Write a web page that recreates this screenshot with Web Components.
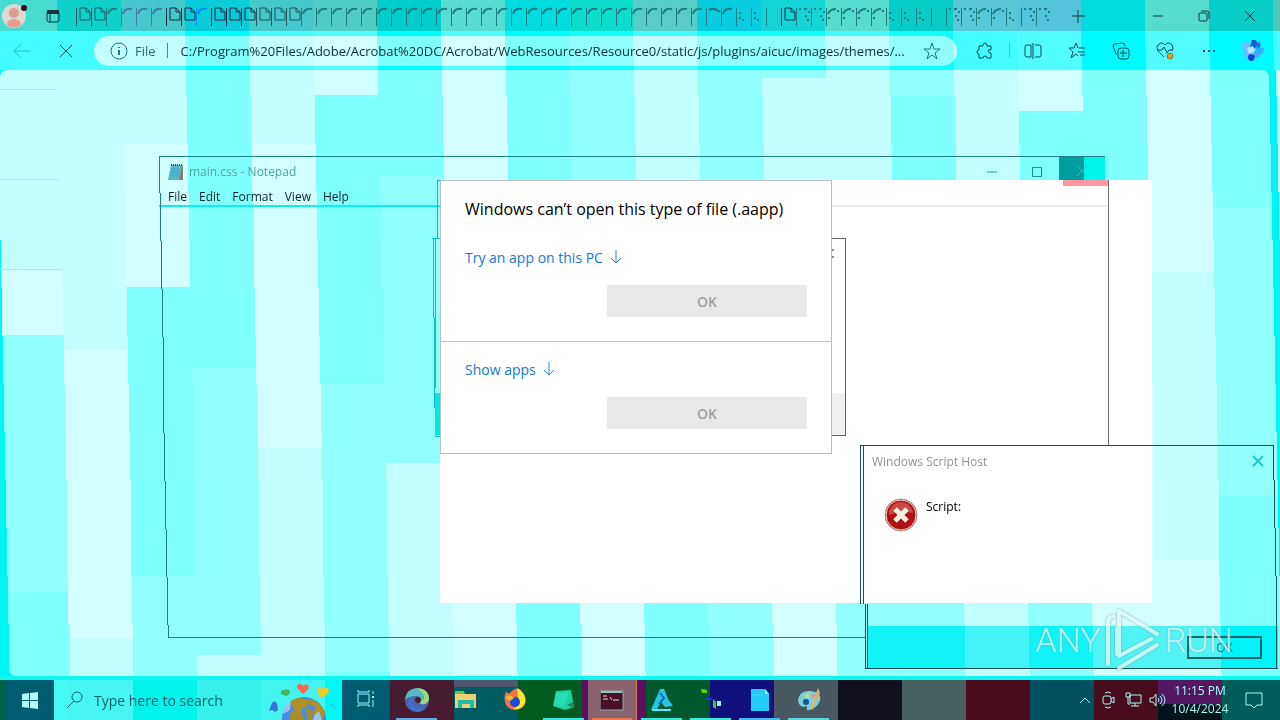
<!DOCTYPE html>
<html lang="en">
<head>
<meta charset="utf-8">
<title>Desktop</title>
<style>
    body {
        margin: 0;
        font-family: "Open Sans", "Noto Sans", sans-serif;
        font-size: 12px;
        color: #0c2c34;
    }
</style>
</head>
<body>
<desktop-shell>
    <edge-browser url="C:/Program%20Files/Adobe/Acrobat%20DC/Acrobat/WebResources/Resource0/static/js/plugins/aicuc/images/themes/..."></edge-browser>
    <notepad-window file="main.css - Notepad"></notepad-window>
    <blank-block></blank-block>
    <open-with-dialog>
        <span slot="title">Windows can’t open this type of file (.aapp)</span>
        <open-option label="Try an app on this PC"></open-option>
        <open-option label="Show apps"></open-option>
    </open-with-dialog>
    <script-host-dialog>Script:</script-host-dialog>
    <run-watermark></run-watermark>
    <task-bar slot="taskbar"></task-bar>
</desktop-shell>

<script>
// hard-edged gradient from [end, color] pairs
function bands(list) {
    let start = 0;
    const stops = list.map(([end, color]) => {
        const stop = `${color} ${start}px ${end}px`;
        start = end;
        return stop;
    });
    return `linear-gradient(90deg, ${stops.join(", ")})`;
}

function define(name, html, setup) {
    customElements.define(name, class extends HTMLElement {
        constructor() {
            super();
            this.attachShadow({ mode: "open" });
            this.shadowRoot.innerHTML = html;
        }

        connectedCallback() {
            if (setup) setup(this.shadowRoot, this);
        }
    });
}

/* --- BACKDROP: 64px columns that move one pixel right every 48px --- */

const TONES = { A: "#d2ffff", B: "#c4ffff", C: "#92ffff", D: "#80ffff" };
const COLUMNS = [
    "B270 A335 C591 D720", "B350 A638 B720", "B143 A287 D575 C720", "D367 C655 B720",
    "B143 A448 B720", "A95 D383 C671 D720", "D175 C463 B720", "A720",
    "D720", "C300 A720", "B300 D720", "C720",
    "C78 B300 A720", "B300 C720", "C95 D300 C720", "B720",
    "A111 D300 C720", "D300 A720", "A272 B560 A720", "D207 C495 D720", "B720"
];

define("glitch-backdrop", `
    <style>
        :host {
            display: block;
            position: absolute;
            inset: 0;
            z-index: -2;
        }

        svg {
            display: block;
            width: 100%;
            height: 100%;
        }
    </style>
    <svg viewBox="0 0 1280 720" preserveAspectRatio="none" shape-rendering="crispEdges" aria-hidden="true"></svg>
`, (root) => {
    let shapes = "";
    COLUMNS.forEach((column, k) => {
        let top = 0;
        column.split(" ").forEach((part) => {
            const bottom = Number(part.slice(1));
            for (let y = top; y < bottom;) {
                const band = Math.floor(y / 48);
                const end = Math.min(bottom, (band + 1) * 48);
                const x = k === 0 ? 0 : 57 + 64 * (k - 1) + band - (band > 10 ? 1 : 0);
                shapes += `<rect x="${x}" y="${y}" width="80" height="${end - y}" fill="${TONES[part[0]]}"/>`;
                y = end;
            }
            top = bottom;
        });
    });
    // window edges of the page
    for (let band = 1; band < 15; band++) {
        const y = Math.max(70, band * 48);
        const h = (band + 1) * 48 - y;
        shapes += `<rect x="${1268 + band}" y="${y}" width="7" height="${h}" fill="#00f4f4"/>`;
        if (band > 3) shapes += `<rect x="0" y="${y}" width="${band - 4}" height="${h}" fill="#00f4f4"/>`;
    }
    shapes += `<path d="M0 70h8q-8 0-8 8zM1261 70h8v8q0-8-8-8zM9 676v-8q0 8 8 8z" fill="#00f4f4" shape-rendering="auto"/>
        <path d="M0 89.500H56M0 179.500H59M0 269.500H62" stroke="#98eef0"/>`;
    root.querySelector("svg").innerHTML = shapes;
});

define("desktop-shell", `
    <style>
        :host {
            display: grid;
            grid-template-rows: 1fr 40px;
            position: relative;
            min-height: 100vh;
            overflow: hidden;
        }
    </style>
    <glitch-backdrop></glitch-backdrop>
    <slot></slot>
    <slot name="taskbar"></slot>
`);

/* --- BROWSER --- */

const TAB_ICONS = {
    d: `<path d="M4 8h6l4 4v8H4zM10 8v4h4"/>`,
    a: `<path d="M2 14C3 10 6 8 11 9" stroke-width="2"/>`,
    c: `<path d="M3 10q5-3 11 2" stroke-width="2"/>`,
    o: `<path d="M3 13h2M3 18h2M6 20h2" stroke-width="2"/>`,
    q: `<path d="M3 9h2M8 9h3M12 12h2M9 16h2M11 20h2" stroke-width="2"/>`,
    r: `<path d="M2 14q2-5 8-5M2 18h2M11 11h2" stroke-width="2"/>`,
    l: ""
};
const TABS = "ddapppDDbDDDddd" + "a".repeat(27) + "caoolDqqrrrrooolqqrroqq";
const TAB_COLORS = { p: "#4878a8", b: "#008cf8", D: "#102c44" };

define("tab-strip", `
    <style>
        :host {
            display: flex;
            align-items: center;
            height: 31px;
            padding-right: 7px;
            color: #18343c;
        }

        .lead {
            display: flex;
            flex: 0 0 76px;
            align-items: center;
        }

        nav {
            display: flex;
            flex: 0 1 990px;
            min-width: 0;
        }

        button {
            box-sizing: border-box;
            border: 0;
            padding: 0;
            background: none;
            color: inherit;
            font: inherit;
        }

        .tab {
            flex: 0 1 15px;
            height: 31px;
            color: #207c80;
        }

        .control {
            display: grid;
            place-items: center;
            width: 46px;
            height: 31px;
        }

        .add {
            width: 24px;
        }

        .space {
            flex: 1;
        }

        svg {
            display: block;
            fill: none;
            stroke: currentColor;
        }

        .avatar {
            stroke: none;
        }
    </style>
    <div class="lead">
        <button aria-label="Profile"><svg class="avatar" width="30" height="31">
            <circle cx="14" cy="16" r="12" fill="#dcd8d4"/>
            <circle cx="14" cy="13" r="5" fill="#e09c94"/>
            <path d="M7 25q0-6 7-6t7 6q-7 5-14 0z" fill="#e89c90"/>
            <circle cx="24" cy="8" r="3" fill="#2c1018"/>
        </svg></button>
        <button class="control" aria-label="Tab actions"><svg width="16" height="16">
            <path d="M2 4h12" stroke-width="4"/><rect x="2" y="3" width="12" height="11" rx="2"/><path d="M5 5v9"/>
        </svg></button>
    </div>
    <nav aria-label="Tabs"></nav>
    <button class="control add" aria-label="New tab"><svg width="14" height="14"><path d="M7 1v13M1 7h13"/></svg></button>
    <span class="space"></span>
    <button class="control" aria-label="Minimize"><svg width="12" height="12"><path d="M1 6h10"/></svg></button>
    <button class="control" aria-label="Restore"><svg width="12" height="12"><rect x="1" y="3" width="8" height="8" rx="1"/><path d="M3 1h6q2 0 2 2v6"/></svg></button>
    <button class="control" aria-label="Close"><svg width="12" height="12"><path d="M1 1l10 10M11 1L1 11"/></svg></button>
`, (root, host) => {
    host.style.background = bands([
        [57, "#48dcd0"], [121, "#10d0cc"], [185, "#44c8cc"], [249, "#08ccd8"], [313, "#44c8cc"],
        [377, "#50ccc4"], [441, "#00cccc"], [505, "#58dcd4"], [569, "#00dce0"], [633, "#0cdccc"],
        [697, "#58ccc8"], [761, "#08cce0"], [825, "#14d4d8"], [889, "#54dccc"], [953, "#08ccc8"],
        [1017, "#58c8d8"], [1081, "#54c4dc"], [1145, "#00dce0"], [1209, "#54dccc"], [1273, "#08ccc8"], [2600, "#50c8c0"]
    ]);
    root.querySelector("nav").innerHTML = [...TABS].map((kind, i) => {
        const icon = kind === "D" ? "d" : "pb".includes(kind) ? "a" : kind;
        const color = TAB_COLORS[kind] || (kind === "d" ? "#1c5860" : "#207c80");
        return `<button class="tab" aria-label="Tab ${i + 1}" style="color: ${color}">
            <svg width="15" height="31"><path d="M.500 8v18"/>${TAB_ICONS[icon]}</svg></button>`;
    }).join("");
});

define("address-bar", `
    <style>
        :host {
            display: flex;
            align-items: center;
            position: relative;
            height: 39px;
            padding-right: 5px;
        }

        /* takes the red out of the columns behind */
        :host::before {
            content: "";
            position: absolute;
            inset: 0;
            z-index: -1;
            background: #800400;
            mix-blend-mode: difference;
        }

        .pill {
            display: flex;
            flex: 1;
            align-items: center;
            position: relative;
            min-width: 0;
            height: 30px;
            margin: 0 6px;
        }

        .pill::before {
            content: "";
            position: absolute;
            inset: 0;
            z-index: -1;
            border-radius: 15px;
            background: #800400;
            mix-blend-mode: plus-lighter;
        }

        button {
            display: grid;
            place-items: center;
            width: 44px;
            height: 30px;
            border: 0;
            padding: 0;
            background: none;
            color: #0c4c54;
        }

        button:disabled {
            color: #20c4c8;
        }

        .info {
            display: flex;
            gap: 7px;
            width: auto;
            padding: 0 11px 0 16px;
            font: 13px "Open Sans", sans-serif;
            color: #286c74;
        }

        .star {
            width: 50px;
        }

        input {
            flex: 1;
            min-width: 0;
            border: 0;
            padding: 0;
            outline: 0;
            background: none;
            font: 13px "Open Sans", sans-serif;
            color: #083038;
        }

        .line {
            width: 1px;
            height: 15px;
            margin-right: 13px;
            background: #3c8c94;
        }

        .divider {
            width: 1px;
            height: 15px;
            margin: 0 1px 0 2px;
            background: #28d0d4;
        }

        svg {
            fill: none;
            stroke: currentColor;
        }

        .info svg,
        .star svg {
            stroke: #147c84;
        }

        .copilot {
            stroke: none;
        }
    </style>
    <button aria-label="Back" disabled><svg width="18" height="16"><path d="M17 8H1M8 1L1 8l7 7"/></svg></button>
    <button aria-label="Stop"><svg width="14" height="14"><path d="M1 1l12 12M13 1L1 13"/></svg></button>
    <div class="pill">
        <button class="info"><svg width="18" height="18"><circle cx="9" cy="9" r="8"/><path d="M9 8v5M9 5v1" stroke-width="2"/></svg>File</button>
        <span class="line"></span>
        <input type="text" aria-label="Address">
        <button class="star" aria-label="Add to favorites"><svg width="18" height="18"><path d="M9 1l2 6h6l-5 4 2 6-5-4-5 4 2-6-5-4h6z" stroke-linejoin="round"/></svg></button>
    </div>
    <button aria-label="Extensions"><svg width="18" height="18"><path d="M3 4h4q0-3 2-3t2 3h4v4q-3-1-3 1t3 2v5h-4q0-2-2-2t-2 2H3v-4q-2 0-2-2t2-2z"/></svg></button>
    <span class="divider"></span>
    <button aria-label="Split screen"><svg width="18" height="18"><path d="M7 3H3q-2 0-2 2v8q0 2 2 2h4zM11 3h4q2 0 2 2v8q0 2-2 2h-4M9 1v16"/></svg></button>
    <button aria-label="Favorites"><svg width="18" height="18"><path d="M10 6L8 1 6 6H1l4 4-2 6 5-4 2 2M11 6h6M10 10h7M12 13h5" stroke-linejoin="round"/></svg></button>
    <button aria-label="Collections"><svg width="18" height="18"><rect x="6" y="6" width="11" height="11" rx="3"/><path d="M11 8v7M8 11h7M5 12q-2 0-2-3L1 4q0-2 2-2l7-1q3 0 3 3"/></svg></button>
    <button aria-label="Browser essentials"><svg width="18" height="18"><path d="M8 15L2 9q-2-4 0-6 4-4 7 0 3-4 7 0 2 3 0 6M1 8h5l2-3 3 6 2-3h4"/><circle cx="14" cy="14" r="3" fill="#d8a818" stroke="#987810"/></svg></button>
    <button aria-label="Settings and more"><svg width="16" height="4"><path d="M2 2h2M7 2h2M12 2h2" stroke-width="2"/></svg></button>
    <button aria-label="Copilot"><svg class="copilot" width="24" height="24">
        <path d="M1 6q1-4 6-3l5 2 1 8-4 6q-6 1-7-4z" fill="#68c0f8"/>
        <path d="M11 1h4l2 5-4 4-4-2z" fill="#1460d8"/>
        <path d="M16 8l7 1q0 5-3 7l-7-2z" fill="#30b0f8"/>
        <path d="M15 6l3-4 2 5-4 3z" fill="#2474e4"/>
        <path d="M8 15l6 1q0 5-3 6-4 0-4-4z" fill="#1838d8"/>
        <path d="M6 9l6-2 2 5-6 3z" fill="#b8e4fc"/>
        <path d="M12 14l5-1 2 5-4 1z" fill="#50a8f0"/>
    </svg></button>
`);

define("edge-browser", `
    <style>
        :host {
            display: grid;
            grid-template-rows: auto auto 1fr;
        }

        /* bottom frame of the window */
        footer {
            align-self: end;
            height: 4px;
            background: #14f4f0;
        }
    </style>
    <tab-strip></tab-strip>
    <address-bar></address-bar>
    <footer></footer>
`, (root, host) => {
    root.querySelector("address-bar").shadowRoot.querySelector("input").value = host.getAttribute("url");
});

/* --- NOTEPAD --- */

define("notepad-window", `
    <style>
        :host {
            display: flex;
            flex-direction: column;
            position: absolute;
            left: 159px;
            top: 156px;
            width: 949px;
            height: 482px;
        }

        header {
            display: flex;
            align-items: center;
            height: 31px;
            padding-left: 8px;
            color: #48a8a4;
        }

        h1 {
            flex: 1;
            margin: 0 0 0 4px;
            font-size: 12px;
            font-weight: 400;
        }

        button {
            display: grid;
            place-items: center;
            border: 0;
            padding: 0;
            background: none;
            font: inherit;
            color: #188c94;
        }

        header button {
            width: 45px;
            height: 30px;
        }

        header .close {
            width: 46px;
            margin-right: 3px;
            align-self: start;
            background: linear-gradient(90deg, #009ca0 25px, #00f4ec 25px);
            color: #28c0c0;
        }

        nav {
            display: flex;
            gap: 12px;
            height: 18px;
            padding-left: 9px;
            border-bottom: 2px solid #10ecf0;
        }

        nav button {
            color: #08242c;
        }

        svg {
            fill: none;
            stroke: currentColor;
        }

        .icon {
            stroke: none;
        }

        .frame {
            position: absolute;
            inset: 0;
            width: 100%;
            height: 100%;
            color: #1c808c;
            pointer-events: none;
        }
    </style>
    <header>
        <svg class="icon" width="18" height="18" aria-hidden="true">
            <path d="M4 2h12l-1 13-2 2H1z" fill="#54b8cc"/><path d="M15 3h1v14h-4z" fill="#907c60"/>
            <path d="M4 2h12" stroke="#305c68" stroke-width="2" stroke-dasharray="1 1"/><path d="M5 6h8M5 9h7M4 12h8" stroke="#38a0d4"/>
        </svg>
        <h1></h1>
        <button aria-label="Minimize"><svg width="12" height="12"><path d="M1 6h10"/></svg></button>
        <button aria-label="Maximize"><svg width="12" height="12"><path d="M1.500 1.500h9v9h-9z"/></svg></button>
        <button class="close" aria-label="Close"><svg width="12" height="12"><path d="M1 1l10 10M11 1L1 11"/></svg></button>
    </header>
    <nav>
        <button>File</button><button>Edit</button><button>Format</button><button>View</button><button>Help</button>
    </nav>
    <svg class="frame" viewBox="0 0 949 482" preserveAspectRatio="none" shape-rendering="crispEdges">
        <path d="M0 36V0H945M1 36V84M2 84V132M3 132V180M4 180V276M5 276V324M6 324V372M7 372V420M8 420V468M9 468V481H706" transform="translate(.500 .500)"/>
        <path d="M278 83V24h3M273 82h8M274 82v80M275 162v90M276 252v28h5M276 82v150" stroke="#10c0c8"/>
        <path d="M276 237h5v42h-5z" fill="#00e8e8" stroke="none"/>
    </svg>
`, (root, host) => {
    root.querySelector("h1").textContent = host.getAttribute("file");
});

define("blank-block", `
    <style>
        :host {
            display: block;
            position: absolute;
            left: 440px;
            top: 180px;
            width: 712px;
            height: 423px;
            background: white;
        }

        svg {
            display: block;
        }
    </style>
    <svg width="712" height="423" fill="none" shape-rendering="crispEdges" aria-hidden="true">
        <path d="M623 0h46v6h-46z" fill="#ff98a0"/>
        <path d="M390 26h277" stroke="#ededed" stroke-width="2"/>
        <path d="M668.500 0v265" stroke="#707070"/>
        <path d="M390 213h15v42h-15z" fill="#f0f0f0"/>
        <path d="M390 58.500h15V255.500h-15" stroke="#606060"/>
        <path d="M392 70h2M392 77h2" stroke="#909090" stroke-width="2"/>
    </svg>
`);

/* --- DIALOGS --- */

define("open-option", `
    <style>
        :host {
            display: flex;
            flex-direction: column;
            padding: 0 24px 24px;
        }

        :host(:last-child) {
            padding-top: 15px;
            border-top: 1px solid #c0c4c4;
        }

        a {
            display: flex;
            gap: 7px;
            align-items: center;
            height: 24px;
            font-size: 14px;
            color: #1478d0;
            text-decoration: none;
        }

        button {
            align-self: flex-end;
            width: 200px;
            height: 32px;
            margin-top: 16px;
            border: 0;
            background: #e9e9e9;
            font: 600 14px "Open Sans", sans-serif;
            color: #a0a0a0;
        }

        svg {
            fill: none;
            stroke: #2c84d0;
        }
    </style>
    <a href="#"><span></span><svg width="12" height="14"><path d="M6 0v13M1 8l5 5 5-5"/></svg></a>
    <button disabled>OK</button>
`, (root, host) => {
    root.querySelector("span").textContent = host.getAttribute("label");
});

define("open-with-dialog", `
    <style>
        :host {
            display: block;
            box-sizing: border-box;
            position: absolute;
            left: 440px;
            top: 180px;
            width: 392px;
            border: 1px solid #b8c0c0;
            background: white;
        }

        h2 {
            margin: 0;
            padding: 16px 24px 24px;
            font-size: 16px;
            line-height: 24px;
            font-weight: 400;
            color: black;
            white-space: nowrap;
        }
    </style>
    <h2><slot name="title"></slot></h2>
    <slot></slot>
`);

define("script-host-dialog", `
    <style>
        :host {
            display: grid;
            grid-template-rows: 32px 1fr 43px;
            position: absolute;
            left: 859px;
            top: 445px;
            width: 419px;
            height: 224px;
        }

        header {
            display: flex;
            align-items: center;
            justify-content: space-between;
            padding: 0 14px 0 13px;
            color: #8c9494;
        }

        button {
            display: block;
            border: 0;
            padding: 0;
            background: none;
            font: inherit;
        }

        main {
            display: flex;
            gap: 8px;
            padding: 21px 25px;
            color: black;
        }

        footer {
            display: flex;
            justify-content: flex-end;
            align-items: center;
            position: relative;
            margin-left: 9px;
            padding: 0 16px;
        }

        footer::before {
            content: "";
            position: absolute;
            inset: 0;
            z-index: -1;
            background: #800c08;
            mix-blend-mode: difference;
        }

        footer button {
            width: 75px;
            height: 23px;
            border: 2px solid #14686c;
            color: #1c7478;
        }

        svg {
            display: block;
            fill: none;
        }

        .frame {
            position: absolute;
            inset: 0;
            width: 100%;
            height: 100%;
            pointer-events: none;
        }
    </style>
    <header>
        <span>Windows Script Host</span>
        <button aria-label="Close"><svg width="12" height="12" stroke="#20c8c8" stroke-width="2"><path d="M1 1l10 10M11 1L1 11"/></svg></button>
    </header>
    <main>
        <svg width="34" height="34" aria-hidden="true">
            <circle cx="17" cy="17" r="16" fill="#b01010" stroke="#a09090"/>
            <circle cx="17" cy="17" r="15" stroke="#f0dcd8" stroke-width="1"/>
            <path d="M5 17a12 12 0 0 1 24-2q-12-3-24 2z" fill="#cc4848"/>
            <path d="M11 11l12 12M23 11L11 23" stroke="#f4f0e0" stroke-width="5"/>
        </svg>
        <slot></slot>
    </main>
    <footer><button>OK</button></footer>
    <svg class="frame" viewBox="0 0 419 224" preserveAspectRatio="none" shape-rendering="crispEdges" stroke="#185058">
        <path d="M1 158V0H414M4 0V158M6 158V223H418M8 158V223M414 0V34M415 34V82M416 82V130M417 130V223" transform="translate(.500 .500)"/>
    </svg>
`);

define("run-watermark", `
    <style>
        :host {
            display: flex;
            align-items: center;
            gap: 4px;
            position: absolute;
            right: 47px;
            bottom: 48px;
            height: 64px;
            font: 300 34px "Liberation Sans Narrow", "Roboto", sans-serif;
            color: #d8f4f4;
            opacity: .8;
            text-shadow: 0 0 2px #70a8a8;
            pointer-events: none;
        }

        svg {
            fill: none;
            stroke: #e0f8f8;
            stroke-width: 4;
            stroke-linejoin: round;
            stroke-linecap: round;
            filter: drop-shadow(0 0 1px #609c9c);
        }
    </style>
    <span>ANY</span>
    <svg width="56" height="64" aria-hidden="true">
        <path d="M3 56V14q0-5 6-6M14 38V3L52 26M12 46V20M14 20v28L46 31M14 60L52 37M14 3L52 26"/>
    </svg>
    <span>RUN</span>
`);

/* --- TASKBAR --- */

const APPS = [
    ["Task View", `<path d="M3 6h11v9H3zM3 2v2h11V2M3 19v-2h11v2M18 3v3M18 12v7" stroke="#a8f4fc"/><path d="M17 8h2v2h-2z" fill="#a8f4fc"/>`, 50, ""],
    ["Microsoft Edge", `<circle cx="12" cy="12" r="12" fill="#4c60b4"/><path d="M0 12Q1 1 12 0q12 1 12 11-1 6-8 5-2-1-1-3 1-5-4-5-7 0-11 4z" fill="#58b8bc"/><path d="M12 0q12 1 12 11-1 6-8 5-2-1-1-3 4 0 4-4-1-5-7-9z" fill="#98d880"/><path d="M9 8q-4 4-1 9 4 5 12 4-5 4-11 2-6-3-6-8 1-5 6-7z" fill="#4470c8"/><circle cx="13" cy="12" r="3" fill="#481c30"/>`, 49, "#68a8e0"],
    ["File Explorer", `<path d="M1 3h8l2 3h11v14H1z" fill="#f0d074"/><path d="M1 3h8l2 3H1z" fill="#60c850"/><path d="M4 20v-8h16v8h-4v-4H8v4z" fill="#20bca8"/>`, 49, ""],
    ["Firefox", `<path d="M3 3q2 4 5 1 4-5 9-3l4 5q5 10-4 15-9 3-14-4-3-7 0-14z" fill="#f07048"/><path d="M14 0q10 6 8 15-3 7-12 6 8-4 5-12z" fill="#fce82c"/><circle cx="12" cy="14" r="5" fill="#1848e0"/><path d="M3 8q5-2 8 2l-4 3-3-1z" fill="#f8b444"/>`, 49, ""],
    ["Notepad", `<path d="M4 3l15-1 3 17-9 3-12-4z" fill="#20d0a0"/><path d="M4 5l14-1-7 15-9-2z" fill="#28dcb4"/><path d="M15 17l6-3 1 6z" fill="#188c64"/>`, 49, "#38e8e0"],
    ["Command Prompt", `<rect x="0" y="3" width="23" height="19" fill="#481028" stroke="#88a8a4"/><path d="M1 4h21" stroke="#98c4bc" stroke-width="2"/><path d="M3 8h4M3 11h5M10 9l2 3M13 12h6" stroke="#e0d8d8"/>`, 49, "#f07850"],
    ["Script", `<path d="M10 1h4l4 10 5 7-8 1-4-5-4 7-6 1z" fill="#20c8e8"/><path d="M2 22h19" stroke="#58e8fc" stroke-width="2"/><path d="M10 5l4 5-5 6" stroke="#1868a8" stroke-width="2"/>`, 49, "#38e8d8"],
    ["Script Host", `<path d="M2 1l6 1v3H3z" fill="#50d818"/><path d="M6 10h7v2H6z" fill="#1838e8"/><path d="M14 11l3 3v7l-3-2z" fill="#38c860"/><path d="M18 13h4v5h-4z" fill="#a8f0e0"/>`, 49, "#38e8d8"],
    ["Document", `<path d="M3 1h14l4 5v17H3z" fill="#20ccf4"/><path d="M17 1v5h4z" fill="#a8f8fc"/><path d="M5 7h10" stroke="#50dcf8"/>`, 49, "#48b8f0"],
    ["Paint", `<path d="M1 13Q2 2 13 3q12 1 10 10-3 7-11 9-3 1-2-4-7 3-9-5z" fill="#78d0d8"/><circle cx="9" cy="14" r="3" fill="#185498"/><circle cx="10" cy="8" r="2" fill="#e8d868"/><circle cx="17" cy="8" r="2" fill="#e49080"/><path d="M21 0l2 5-8 17-2-2z" fill="#d8b470"/>`, 49, "#58d8d8"]
];

define("task-bar", `
    <style>
        :host {
            display: flex;
            height: 40px;
            color: #a8fcf8;
        }

        button {
            display: grid;
            place-items: center;
            position: relative;
            box-sizing: border-box;
            height: 40px;
            border: 0;
            padding: 0;
            background: none;
            color: inherit;
            font: inherit;
        }

        .start {
            width: 48px;
            margin-left: 6px;
        }

        .search {
            display: flex;
            flex: 0 1 288px;
            align-items: center;
            gap: 10px;
            min-width: 0;
            color: #0c6468;
        }

        .search > svg:first-child {
            flex: none;
            margin-left: 12px;
        }

        input {
            flex: 1;
            min-width: 0;
            border: 0;
            padding: 0;
            outline: 0;
            background: none;
            font: 14px "Open Sans", sans-serif;
            color: inherit;
        }

        input::placeholder {
            color: inherit;
            opacity: 1;
        }

        .apps,
        .tray {
            display: flex;
        }

        .apps .open::after {
            content: "";
            position: absolute;
            right: 4px;
            bottom: 0;
            left: 4px;
            height: 2px;
            background: var(--mark);
        }

        .apps .active {
            border-right: 1px solid #d07860;
            background: #8c6470;
        }

        .tray {
            margin-left: auto;
            padding-right: 4px;
        }

        .tray button {
            width: 24px;
        }

        .tray .clock {
            width: 62px;
            line-height: 18px;
            align-content: center;
        }

        .tray .note {
            width: 45px;
        }

        svg {
            display: block;
            fill: none;
        }
    </style>
    <button class="start" aria-label="Start"><svg width="18" height="18"><path d="M1 3l7-1v7H1zM9 2l8-1v8H9zM1 10h7v7l-7-1zM9 10h8v8l-8-1z" fill="#b0fcfc"/></svg></button>
    <label class="search">
        <svg width="18" height="18" stroke="currentColor"><circle cx="11" cy="6" r="5"/><path d="M8 10l-7 7"/></svg>
        <input type="search" placeholder="Type here to search">
        <svg width="74" height="40" aria-hidden="true">
            <circle cx="36" cy="39" r="22" fill="#488ce0"/>
            <path d="M22 22q8-6 14-3l9 1q9 4 12 13l-3 7h-8l-2-8 4-5-8-3-2 3-4 1v6l-6-1z" fill="#b09020"/>
            <path d="M23 30l10 4 4 6H22zM38 27l5 3 2 10h-6z" fill="#a88c28"/>
            <path d="M16 27q4-5 7-6l-1 9-7 4zM47 34l4-3 3 9h-9z" fill="#98c4f0"/>
            <path d="M35 14l-6-6q-1-4 3-4 2 0 3 2 2-3 5-1 3 3-5 9z" fill="#fc6850"/>
            <path d="M52 18l-3-9q2-3 5 0 5-3 7 1 1 4-9 8z" fill="#f4cc20"/>
            <path d="M18 16l-5-2q-1-4 3-4 3-2 6 1 0 4-4 5z" fill="#48b458"/>
            <path d="M1 31l3-8q3-4 5 1l1 6-3 2-3-2z" fill="#3c70dc"/>
            <path d="M62 24q4 0 5 5" stroke="#18b8cc"/>
        </svg>
    </label>
    <div class="apps"></div>
    <div class="tray">
        <button aria-label="Show hidden icons"><svg width="12" height="8" stroke="currentColor"><path d="M1 7l5-5 5 5"/></svg></button>
        <button aria-label="Meet Now"><svg width="14" height="18" stroke="currentColor"><rect x="1" y="5" width="8" height="8" rx="2"/><path d="M9 8l3-2v6l-3-2M3 2q3-2 6 0M3 16q3 2 6 0"/></svg></button>
        <button aria-label="Network"><svg width="17" height="16" stroke="currentColor"><path d="M5 3h11v8H5zM10 11v3M6 14h8M1 1h4v4H1zM3 5v7h2"/></svg></button>
        <button aria-label="Volume"><svg width="17" height="16" stroke="currentColor"><path d="M1 6h3l3-4v12l-3-4H1zM9 6q2 2 0 4M11 4q4 4 0 8M13 2q6 6 0 12"/></svg></button>
        <button class="clock"><span>11:15 PM</span><span>10/4/2024</span></button>
        <button class="note" aria-label="Notifications"><svg width="18" height="18" stroke="currentColor"><path d="M1 2h16v12h-5l-3 3-3-3H1z"/></svg></button>
    </div>
`, (root, host) => {
    // two columns change colour part of the way down
    host.style.background = `linear-gradient(#50566c, #50566c) 454px 0 / 64px 7px no-repeat,
        linear-gradient(#00141c, #00141c) 1158px 24px / 64px 16px no-repeat, ` + bands([
        [6, "#006048"], [54, "#005c70"], [390, "#005c70"], [454, "#481c30"], [518, "#005c60"],
        [582, "#005c20"], [646, "#5c1060"], [710, "#00582c"], [774, "#10107c"], [838, "#485860"],
        [902, "#10101e"], [966, "#486060"], [1030, "#480c1c"], [1094, "#005060"], [1158, "#480c1c"],
        [1222, "#541860"], [2600, "#005c58"]
    ]);
    root.querySelector(".search").style.background = bands([
        [15, "#48f8f4"], [79, "#48f4f4"], [143, "#00f4ec"], [207, "#38f0ec"], [271, "#44f4f0"], [288, "#00f8f4"]
    ]);
    root.querySelector(".apps").innerHTML = APPS.map(([name, art, width, mark]) => `
        <button class="${mark ? "open" : ""} ${name === "Command Prompt" ? "active" : ""}" aria-label="${name}"
            style="width: ${width}px; --mark: ${mark || "none"}"><svg width="24" height="24">${art}</svg></button>`).join("");
});
</script>
</body>
</html>
